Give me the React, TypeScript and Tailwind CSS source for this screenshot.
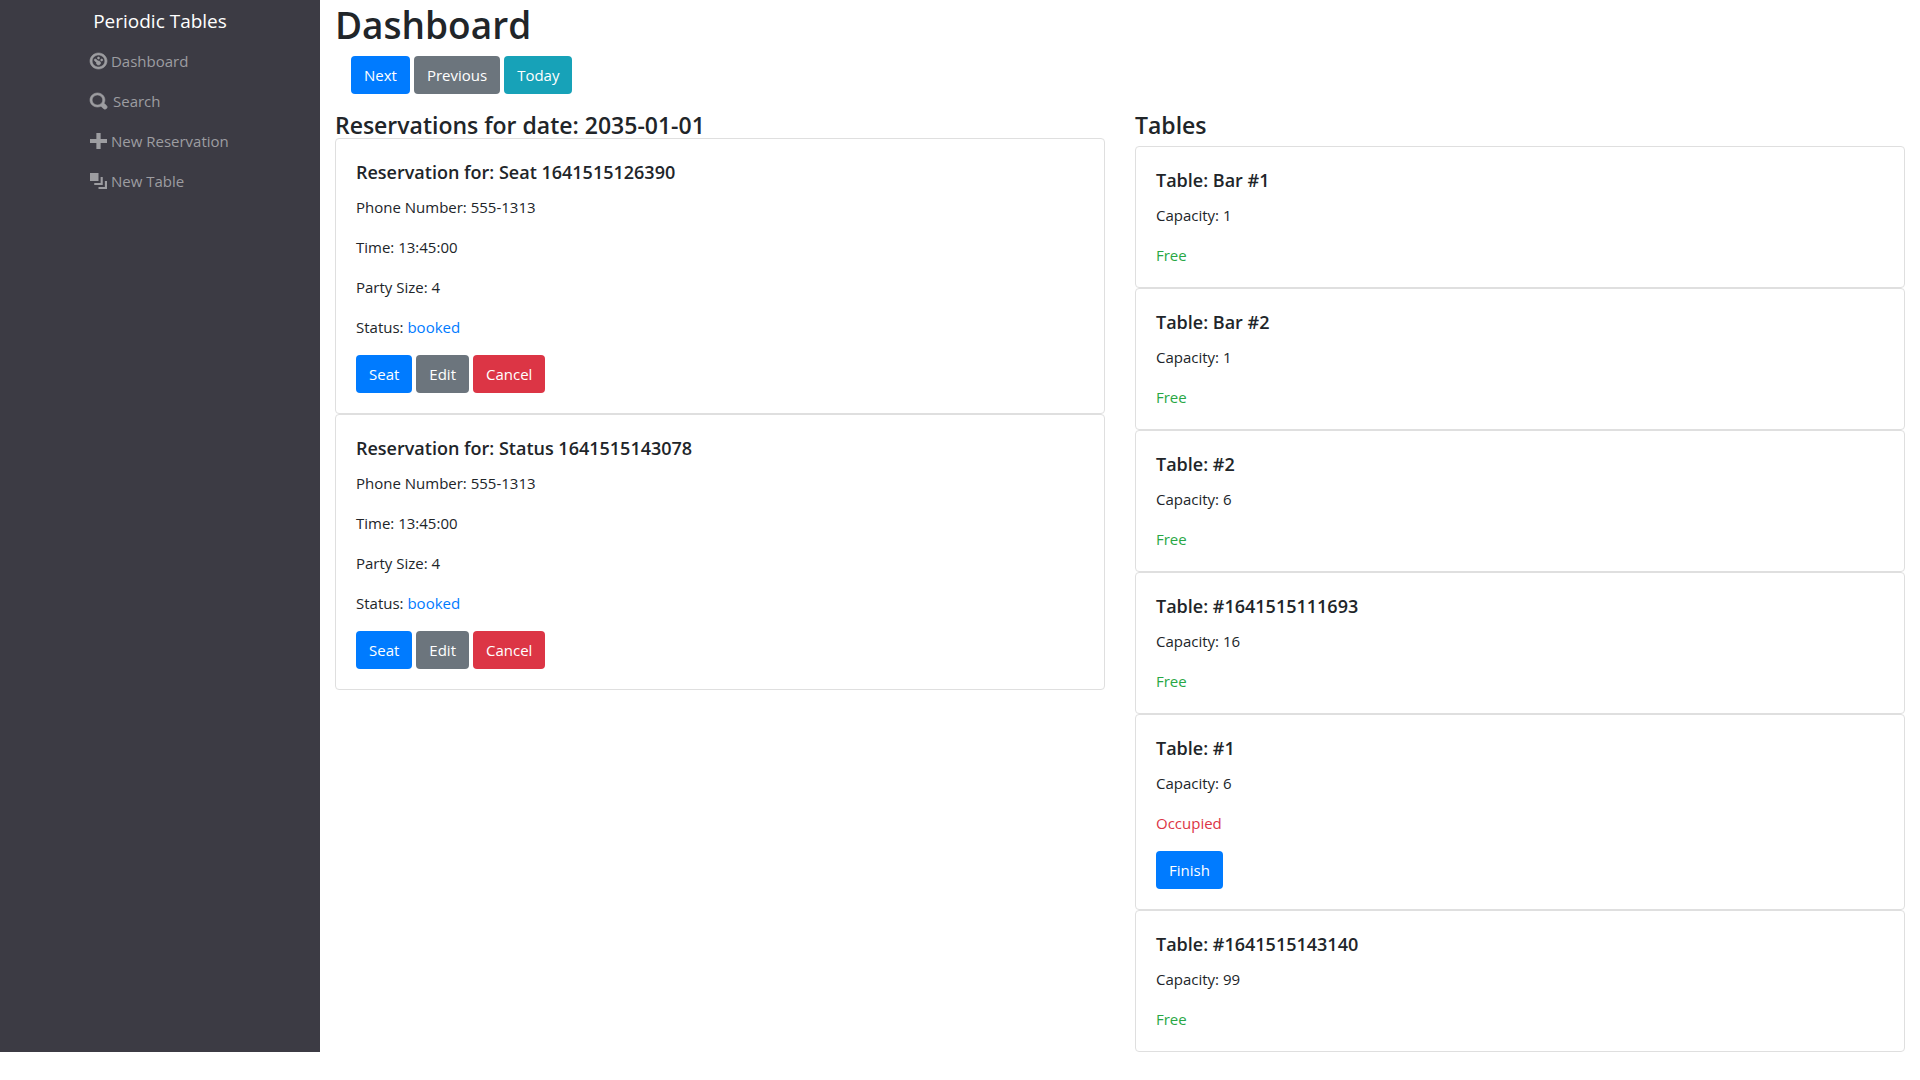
import React from "react";

type Variant = "primary" | "secondary" | "info" | "danger";

const variantClass: Record<Variant, string> = {
  primary: "bg-[#007bff]",
  secondary: "bg-[#6c757d]",
  info: "bg-[#17a2b8]",
  danger: "bg-[#dc3545]",
};

function Button({ variant, children }: { variant: Variant; children: React.ReactNode }) {
  return (
    <button
      type="button"
      className={`h-[38px] cursor-pointer rounded px-[13px] text-center text-[15px] leading-6 text-white ${variantClass[variant]}`}
    >
      {children}
    </button>
  );
}

const navItems = [
  {
    label: "Dashboard",
    gap: "gap-1",
    stroke: 0.3,
    path: "M4 0c-2.2 0-4 1.8-4 4s1.8 4 4 4 4-1.8 4-4-1.8-4-4-4zm0 1c1.66 0 3 1.34 3 3s-1.34 3-3 3-3-1.34-3-3 1.34-3 3-3zm0 1c-.28 0-.5.22-.5.5s.22.5.5.5.5-.22.5-.5-.22-.5-.5-.5zm-1.66 1a.5.5 0 0 0-.19.84l.91.91c-.02.08-.06.16-.06.25 0 .55.45 1 1 1s1-.45 1-1-.45-1-1-1c-.09 0-.17.04-.25.06l-.91-.91a.5.5 0 0 0-.44-.16.5.5 0 0 0-.06 0zm3.16 0c-.28 0-.5.22-.5.5s.22.5.5.5.5-.22.5-.5-.22-.5-.5-.5z",
  },
  {
    label: "Search",
    gap: "gap-1.5",
    stroke: 0.3,
    path: "M3.5 0c-1.93 0-3.5 1.57-3.5 3.5s1.57 3.5 3.5 3.5c.59 0 1.17-.14 1.66-.41a1 1 0 0 0 .13.13l1 1a1.02 1.02 0 1 0 1.44-1.44l-1-1a1 1 0 0 0-.16-.13c.27-.49.44-1.06.44-1.66 0-1.93-1.55-3.5-3.5-3.5zm0 1c1.39 0 2.5 1.11 2.5 2.5 0 .66-.24 1.27-.66 1.72l-.03.03a1 1 0 0 0-.13.13c-.44.4-1.04.63-1.69.63-1.39 0-2.5-1.11-2.5-2.5s1.11-2.5 2.5-2.5z",
  },
  {
    label: "New Reservation",
    gap: "gap-1",
    stroke: 0,
    path: "M3 0v3h-3v2h3v3h2v-3h3v-2h-3v-3h-2z",
  },
  {
    label: "New Table",
    gap: "gap-1",
    stroke: 0,
    path: "M0 0v4h4v-4h-4zm5 2v3h-3v1h4v-4h-1zm2 2v3h-3v1h4v-4h-1z",
  },
];

const reservations = [
  { name: "Seat 1641515126390", phone: "555-1313", time: "13:45:00", size: 4, status: "booked" },
  { name: "Status 1641515143078", phone: "555-1313", time: "13:45:00", size: 4, status: "booked" },
];

const tables = [
  { name: "Bar #1", capacity: 1, occupied: false },
  { name: "Bar #2", capacity: 1, occupied: false },
  { name: "#2", capacity: 6, occupied: false },
  { name: "#1641515111693", capacity: 16, occupied: false },
  { name: "#1", capacity: 6, occupied: true },
  { name: "#1641515143140", capacity: 99, occupied: false },
];

function Card({ title, children }: { title: string; children: React.ReactNode }) {
  return (
    <article className="rounded border border-[#dfdfdf] bg-white p-5">
      <h3 className="mb-2.5 text-[18px] leading-[26px] font-semibold">{title}</h3>
      <div className="flex flex-col gap-4">{children}</div>
    </article>
  );
}

export default function App() {
  return (
    <div className="flex items-stretch bg-white font-['Open_Sans',sans-serif] text-[15px] leading-6 text-[#212529]">
      <nav className="flex w-1/6 flex-col items-center bg-[#3c3b44]">
        <a href="#" className="pt-1.5 pb-[5px] text-[19px] leading-[30px] text-white">
          Periodic Tables
        </a>
        <ul className="w-[140px]">
          {navItems.map((item) => (
            <li key={item.label}>
              <a href="#" className={`flex items-center py-2 whitespace-nowrap text-[#9d9da1] ${item.gap}`}>
                <svg
                  viewBox="0 0 8 8"
                  preserveAspectRatio="none"
                  className="h-4 w-[17px] shrink-0 overflow-visible fill-current stroke-current"
                  strokeWidth={item.stroke}
                  aria-hidden="true"
                >
                  <path d={item.path} />
                </svg>
                {item.label}
              </a>
            </li>
          ))}
        </ul>
      </nav>

      <main className="min-w-0 flex-1 px-[15px]">
        <h1 className="mb-1.5 text-[37px] leading-[50px] font-semibold">Dashboard</h1>
        <div className="mb-[18px] flex gap-1 pl-4">
          <Button variant="primary">Next</Button>
          <Button variant="secondary">Previous</Button>
          <Button variant="info">Today</Button>
        </div>
        <div className="grid grid-cols-2 gap-[30px]">
          <section>
            <h2 className="text-[23px] leading-[26px] font-semibold">Reservations for date: 2035-01-01</h2>
            {reservations.map((r) => (
              <Card key={r.name} title={`Reservation for: ${r.name}`}>
                <p>Phone Number: {r.phone}</p>
                <p>Time: {r.time}</p>
                <p>Party Size: {r.size}</p>
                <p>
                  Status: <span className="text-[#007bff]">{r.status}</span>
                </p>
                <div className="flex gap-1">
                  <Button variant="primary">Seat</Button>
                  <Button variant="secondary">Edit</Button>
                  <Button variant="danger">Cancel</Button>
                </div>
              </Card>
            ))}
          </section>
          <section>
            <h2 className="mb-2 text-[23px] leading-[26px] font-semibold">Tables</h2>
            {tables.map((t) => (
              <Card key={t.name} title={`Table: ${t.name}`}>
                <p>Capacity: {t.capacity}</p>
                {t.occupied ? (
                  <>
                    <p className="text-[#dc3545]">Occupied</p>
                    <div className="flex">
                      <Button variant="primary">Finish</Button>
                    </div>
                  </>
                ) : (
                  <p className="text-[#28a745]">Free</p>
                )}
              </Card>
            ))}
          </section>
        </div>
      </main>
    </div>
  );
}
